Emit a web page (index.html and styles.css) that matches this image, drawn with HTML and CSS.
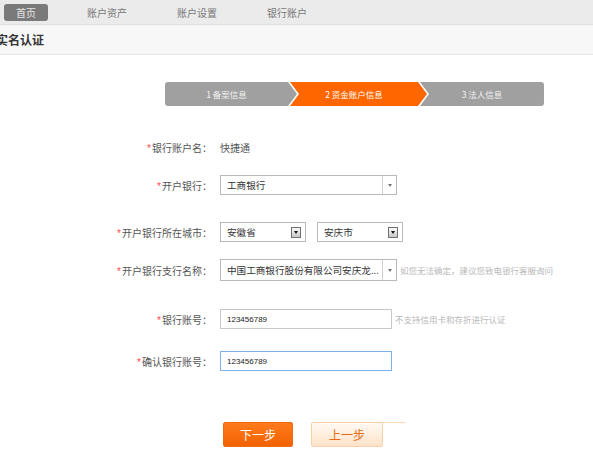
FILE: index.html
```html
<!DOCTYPE html>
<html lang="zh-CN">
<head>
<meta charset="utf-8">
<title>实名认证</title>
<link rel="stylesheet" href="styles.css">
</head>
<body>
<nav class="topnav">
  <a class="nav-item active">首页</a>
  <a class="nav-item">账户资产</a>
  <a class="nav-item">账户设置</a>
  <a class="nav-item">银行账户</a>
</nav>
<div class="titlebar"><h1>实名认证</h1></div>

<div class="steps">
  <div class="step step-first">1 备案信息</div>
  <div class="step step-mid current">2 资金账户信息</div>
  <div class="step step-last">3 法人信息</div>
</div>

<form class="form">
  <div class="row gap-1">
    <label class="label"><span class="req">*</span>银行账户名<span class="colon">：</span></label>
    <span class="value">快捷通</span>
  </div>
  <div class="row gap-2">
    <label class="label"><span class="req">*</span>开户银行<span class="colon">：</span></label>
    <div class="combo wide"><span class="combo-text">工商银行</span><span class="combo-arrow"></span></div>
  </div>
  <div class="row gap-3">
    <label class="label"><span class="req">*</span>开户银行所在城市<span class="colon">：</span></label>
    <div class="xpsel"><span class="combo-text">安徽省</span><span class="xpbtn"></span></div>
    <div class="xpsel second"><span class="combo-text">安庆市</span><span class="xpbtn"></span></div>
  </div>
  <div class="row gap-4 tall">
    <label class="label"><span class="req">*</span>开户银行支行名称<span class="colon">：</span></label>
    <div class="combo wide tall-box"><span class="combo-text">中国工商银行股份有限公司安庆龙...</span><span class="combo-arrow"></span></div>
    <span class="hint">如您无法确定，建议您致电银行客服询问</span>
  </div>
  <div class="row gap-5">
    <label class="label"><span class="req">*</span>银行账号<span class="colon">：</span></label>
    <div class="input">123456789</div>
    <span class="hint">不支持信用卡和存折进行认证</span>
  </div>
  <div class="row gap-6">
    <label class="label"><span class="req">*</span>确认银行账号<span class="colon">：</span></label>
    <div class="input focus">123456789</div>
  </div>
  <div class="actions">
    <button type="button" class="btn btn-next">下一步</button>
    <button type="button" class="btn btn-prev">上一步</button>
  </div>
</form>
</body>
</html>
```
FILE: styles.css
```css
body {
  margin: 0;
  background: #fff;
  font-family: "Noto Sans CJK SC", "Liberation Sans", sans-serif;
  color: #555;
}

.topnav {
  height: 24px;
  background: #ebebeb;
  border-bottom: 1px solid #e0e0e0;
  display: flex;
  align-items: center;
  padding-left: 4px;
}
.nav-item {
  width: 90px;
  text-align: center;
  font-size: 10px;
  line-height: 17px;
  color: #777;
}
.nav-item.active {
  width: 44px;
  margin-right: 14px;
  background: #7a7a7a;
  color: #e6e6e6;
  border-radius: 3px;
}

.titlebar {
  height: 29px;
  background: #f7f7f7;
  border-bottom: 1px solid #e6e6e6;
  display: flex;
  align-items: center;
}
.titlebar h1 {
  margin: 0 0 0 -4px;
  font-size: 12px;
  font-weight: bold;
  color: #333;
}

.steps {
  display: flex;
  height: 24px;
  margin: 27px 0 0 165px;
}
.step {
  height: 24px;
  line-height: 24px;
  font-size: 8.5px;
  color: #f2f2f2;
  background: #a0a0a0;
  text-align: center;
  box-sizing: border-box;
}
.step-first {
  width: 132px;
  padding-right: 9px;
  border-radius: 3px 0 0 3px;
  clip-path: polygon(0 0, calc(100% - 9px) 0, 100% 50%, calc(100% - 9px) 100%, 0 100%);
}
.step-mid {
  width: 137px;
  margin-left: -7px;
  padding-right: 9px;
  clip-path: polygon(0 0, calc(100% - 9px) 0, 100% 50%, calc(100% - 9px) 100%, 0 100%, 9px 50%);
}
.step-last {
  width: 124px;
  margin-left: -7px;
  border-radius: 0 3px 3px 0;
  clip-path: polygon(0 0, 100% 0, 100% 100%, 0 100%, 9px 50%);
}
.step.current {
  background: #ff6600;
  color: #fff;
}

.form {
  margin: 0;
}
.row {
  display: flex;
  align-items: center;
  height: 20px;
}
.row.tall { height: 22px; }
.gap-1 { margin-top: 31px; }
.gap-2 { margin-top: 18px; }
.gap-3 { margin-top: 27px; }
.gap-4 { margin-top: 17px; }
.gap-5 { margin-top: 28px; }
.gap-6 { margin-top: 22px; }

.label {
  width: 212px;
  flex: none;
  text-align: right;
  font-size: 10px;
  color: #555;
  margin-right: 8px;
}
.colon {
  font-family: "Noto Sans CJK TC", "Noto Sans CJK SC", sans-serif;
}
.req {
  color: #ff4a4a;
  margin-right: 1px;
  font-family: "Liberation Sans", sans-serif;
  font-size: 10px;
}
.value {
  font-size: 10px;
  color: #555;
}

.combo {
  height: 20px;
  box-sizing: border-box;
  border: 1px solid #b9b9b9;
  background: #fff;
  display: flex;
  align-items: stretch;
}
.combo.wide { width: 177px; }
.combo.tall-box { height: 22px; }
.combo-text {
  flex: 1;
  padding-left: 6px;
  font-size: 9.6px;
  color: #333;
  display: flex;
  align-items: center;
  white-space: nowrap;
  overflow: hidden;
}
.combo-arrow {
  width: 13px;
  border-left: 1px solid #d0d0d0;
  display: flex;
  align-items: center;
  justify-content: center;
}
.combo-arrow::before {
  content: "";
  border-left: 2.5px solid transparent;
  border-right: 2.5px solid transparent;
  border-top: 3px solid #777;
}

.xpsel {
  width: 86px;
  height: 20px;
  box-sizing: border-box;
  border: 1px solid #b9b9b9;
  background: #fff;
  display: flex;
  align-items: center;
  padding-right: 4px;
}
.xpsel.second {
  margin-left: 11px;
}
.xpbtn {
  width: 10px;
  height: 11px;
  box-sizing: border-box;
  border: 1px solid #707070;
  background: linear-gradient(#fafafa, #c8c8c8);
  display: flex;
  align-items: center;
  justify-content: center;
}
.xpbtn::before {
  content: "";
  border-left: 2.5px solid transparent;
  border-right: 2.5px solid transparent;
  border-top: 3px solid #111;
}

.input {
  width: 172px;
  height: 20px;
  box-sizing: border-box;
  border: 1px solid #c8c8c8;
  padding-left: 6px;
  display: flex;
  align-items: center;
  font-family: "Liberation Sans", sans-serif;
  font-size: 8px;
  color: #222;
}
.input.focus {
  border-color: #7fb2e8;
}

.hint {
  margin-left: 3px;
  font-size: 8.5px;
  color: #b8b8b8;
  white-space: nowrap;
}

.actions {
  display: flex;
  margin: 51px 0 0 223px;
  gap: 18px;
}
.btn {
  height: 25px;
  box-sizing: border-box;
  font-family: "Noto Sans CJK SC", sans-serif;
  font-size: 12px;
  border-radius: 2px;
  padding: 0;
  cursor: pointer;
}
.btn-next {
  width: 70px;
  border: 1px solid #f06a10;
  background: linear-gradient(#ff7a1c, #f26200);
  color: #fff;
}
.btn-prev {
  position: relative;
  width: 72px;
  border: 1px solid #fbd0a8;
  background: linear-gradient(#fffaf4, #ffe2c8);
  color: #e86a10;
}
.btn-prev::after {
  content: "";
  position: absolute;
  left: 100%;
  top: -1px;
  width: 24px;
  height: 1px;
  background: #fcd8b6;
}
```
